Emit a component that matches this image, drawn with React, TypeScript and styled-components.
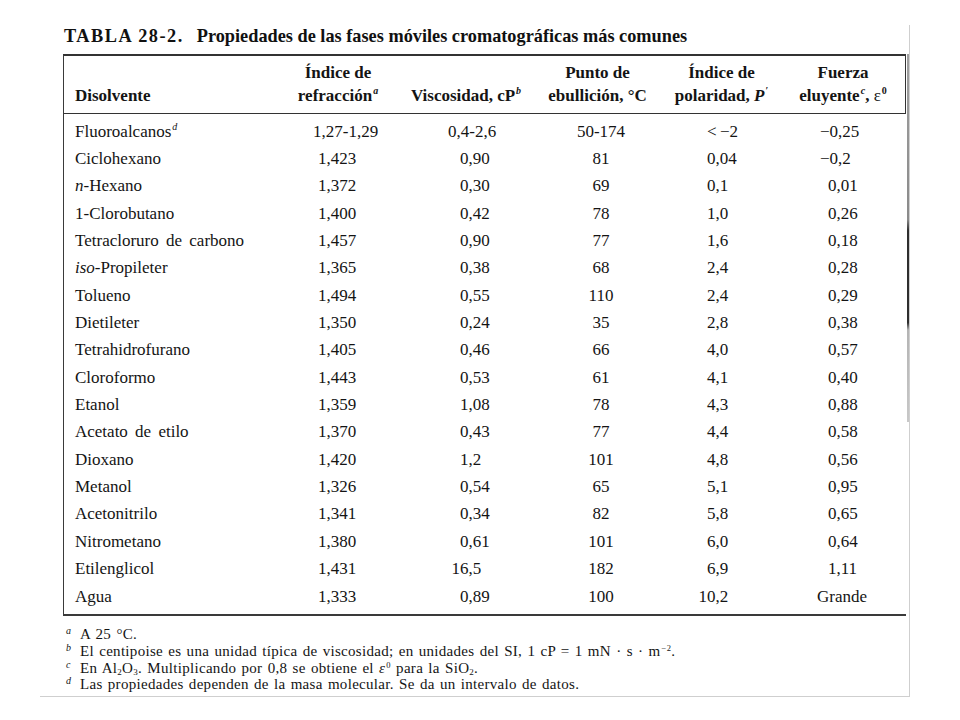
import React from "react";
import styled, { createGlobalStyle } from "styled-components";

const Global = createGlobalStyle`
  html, body { margin: 0; padding: 0; background: #ffffff; }
  body { font-family: "Liberation Serif", "Times New Roman", serif; color: #141414; }
`;

const COLS = "212px 124px 132px 131px 117px 126px";

const Page = styled.div`
  margin: 25px 0 0 40px;
  width: 870px;
  height: 672px;
  box-sizing: border-box;
  border-right: 1px solid #cfcfcf;
  border-bottom: 1px solid #cfcfcf;
  padding-left: 23px;
`;

const Title = styled.h1`
  margin: 4px 0 0 1px;
  font-size: 18.3px;
  line-height: 22px;
  font-weight: bold;
  color: #111;
  white-space: nowrap;
`;

const TitleNum = styled.span`
  letter-spacing: 1.5px;
  margin-right: 13px;
`;

const TableFrame = styled.div`
  position: relative;
  margin-top: 7px;
  width: 843px;
  border-left: 1.5px solid #3a3a3a;
  border-top: 2px solid #333;
  border-bottom: 2px solid #3a3a3a;
  box-sizing: border-box;
  &::after {
    content: "";
    position: absolute;
    right: -3px;
    top: -2px;
    width: 2px;
    height: 368px;
    background: linear-gradient(
      to bottom,
      #a0a0a0 0%,
      #8a8a8a 45%,
      #2e2e2e 48%,
      #2e2e2e 73%,
      #b4b4b4 75%,
      #c8c8c8 100%
    );
  }
`;

const HeadRow = styled.div`
  display: grid;
  grid-template-columns: ${COLS};
  align-items: end;
  padding: 5px 0 6px;
  border-bottom: 1.5px solid #333;
  border-right: 1.5px solid #333;
  font-weight: bold;
  font-size: 17px;
  line-height: 23px;
`;

const HeadCell = styled.div<{ $left?: boolean }>`
  text-align: ${(p) => (p.$left ? "left" : "center")};
  padding-left: ${(p) => (p.$left ? "11px" : "0")};
  white-space: nowrap;
`;

const Body = styled.div`
  padding: 4px 0 4px;
`;

const Row = styled.div`
  display: grid;
  grid-template-columns: ${COLS};
  height: 27.35px;
  align-items: center;
  font-size: 17px;
  line-height: 20px;
`;

const NameCell = styled.div`
  padding-left: 11px;
  white-space: nowrap;
  word-spacing: 3px;
`;

const NumCell = styled.div<{ $x: number; $center?: boolean }>`
  white-space: nowrap;
  text-align: ${(p) => (p.$center ? "center" : "left")};
  padding-left: ${(p) => p.$x}px;
`;

const Sup = styled.sup<{ $italic?: boolean }>`
  font-size: 10px;
  line-height: 0;
  vertical-align: 7px;
  font-style: ${(p) => (p.$italic ? "italic" : "normal")};
  margin-left: 1px;
`;

const NoteSup = styled.sup`
  font-size: 8.5px;
  line-height: 0;
  vertical-align: 5px;
  margin-left: 1px;
`;

const Sub = styled.sub`
  font-size: 9px;
  line-height: 0;
  vertical-align: -2px;
`;

const Ital = styled.i``;

const Eps = styled.span`
  font-weight: normal;
`;

const Notes = styled.div`
  margin-top: 10px;
  padding-left: 3px;
  font-size: 15px;
  line-height: 16.7px;
  letter-spacing: 0.3px;
  word-spacing: 1.2px;
`;

const Note = styled.div`
  white-space: nowrap;
  height: 16.7px;
`;

const Mark = styled.span`
  display: inline-block;
  width: 14px;
  font-style: italic;
  font-size: 10px;
  line-height: 0;
  vertical-align: 5px;
`;

type RowData = { name: React.ReactNode; vals: string[] };

const rows: RowData[] = [
  { name: <>Fluoroalcanos<Sup $italic>d</Sup></>, vals: ["1,27-1,29", "0,4-2,6", "50-174", "<\u2009−2", "−0,25"] },
  { name: "Ciclohexano", vals: ["1,423", "0,90", "81", "0,04", "−0,2"] },
  { name: <><Ital>n</Ital>-Hexano</>, vals: ["1,372", "0,30", "69", "0,1", "0,01"] },
  { name: "1-Clorobutano", vals: ["1,400", "0,42", "78", "1,0", "0,26"] },
  { name: "Tetracloruro de carbono", vals: ["1,457", "0,90", "77", "1,6", "0,18"] },
  { name: <><Ital>iso</Ital>-Propileter</>, vals: ["1,365", "0,38", "68", "2,4", "0,28"] },
  { name: "Tolueno", vals: ["1,494", "0,55", "110", "2,4", "0,29"] },
  { name: "Dietileter", vals: ["1,350", "0,24", "35", "2,8", "0,38"] },
  { name: "Tetrahidrofurano", vals: ["1,405", "0,46", "66", "4,0", "0,57"] },
  { name: "Cloroformo", vals: ["1,443", "0,53", "61", "4,1", "0,40"] },
  { name: "Etanol", vals: ["1,359", "1,08", "78", "4,3", "0,88"] },
  { name: "Acetato de etilo", vals: ["1,370", "0,43", "77", "4,4", "0,58"] },
  { name: "Dioxano", vals: ["1,420", "1,2", "101", "4,8", "0,56"] },
  { name: "Metanol", vals: ["1,326", "0,54", "65", "5,1", "0,95"] },
  { name: "Acetonitrilo", vals: ["1,341", "0,34", "82", "5,8", "0,65"] },
  { name: "Nitrometano", vals: ["1,380", "0,61", "101", "6,0", "0,64"] },
  { name: "Etilenglicol", vals: ["1,431", "16,5", "182", "6,9", "1,11"] },
  { name: "Agua", vals: ["1,333", "0,89", "100", "10,2", "Grande"] },
];

// left edge (relative to column) of a single-digit value, and centering flag
const colX = [42, 60, 7, 44, 48];
const colCenter = [false, false, true, false, false];

function shiftOf(v: string): number {
  if (v === "0,4-2,6") return -12;
  if (v === "1,27-1,29") return -5;
  if (v === "Grande") return -11;
  if (/^\d\d,/.test(v)) return -8.5;
  if (v.startsWith("−")) return -8;
  return 0;
}

export default function App() {
  return (
    <>
      <Global />
      <Page>
        <Title>
          <TitleNum>TABLA 28-2.</TitleNum>Propiedades de las fases móviles cromatográficas más comunes
        </Title>
        <TableFrame>
          <HeadRow>
            <HeadCell $left>Disolvente</HeadCell>
            <HeadCell>
              Índice de
              <br />
              refracción<Sup $italic>a</Sup>
            </HeadCell>
            <HeadCell>
              Viscosidad, cP<Sup $italic>b</Sup>
            </HeadCell>
            <HeadCell>
              Punto de
              <br />
              ebullición, °C
            </HeadCell>
            <HeadCell>
              Índice de
              <br />
              polaridad, <Ital>P</Ital>
              <Sup>′</Sup>
            </HeadCell>
            <HeadCell>
              Fuerza
              <br />
              eluyente<Sup $italic>c</Sup>, <Eps>ε</Eps>
              <Sup>0</Sup>
            </HeadCell>
          </HeadRow>
          <Body>
            {rows.map((r, i) => (
              <Row key={i}>
                <NameCell>{r.name}</NameCell>
                {r.vals.map((v, j) => (
                  <NumCell key={j} $x={colX[j] + shiftOf(v)} $center={colCenter[j]}>
                    {v}
                  </NumCell>
                ))}
              </Row>
            ))}
          </Body>
        </TableFrame>
        <Notes>
          <Note>
            <Mark>a</Mark>A 25 °C.
          </Note>
          <Note>
            <Mark>b</Mark>El centipoise es una unidad típica de viscosidad; en unidades del SI, 1 cP = 1 mN · s · m
            <NoteSup>−2</NoteSup>.
          </Note>
          <Note>
            <Mark>c</Mark>En Al<Sub>2</Sub>O<Sub>3</Sub>. Multiplicando por 0,8 se obtiene el <Ital>ε</Ital>
            <NoteSup>0</NoteSup> para la SiO<Sub>2</Sub>.
          </Note>
          <Note>
            <Mark>d</Mark>Las propiedades dependen de la masa molecular. Se da un intervalo de datos.
          </Note>
        </Notes>
      </Page>
    </>
  );
}
